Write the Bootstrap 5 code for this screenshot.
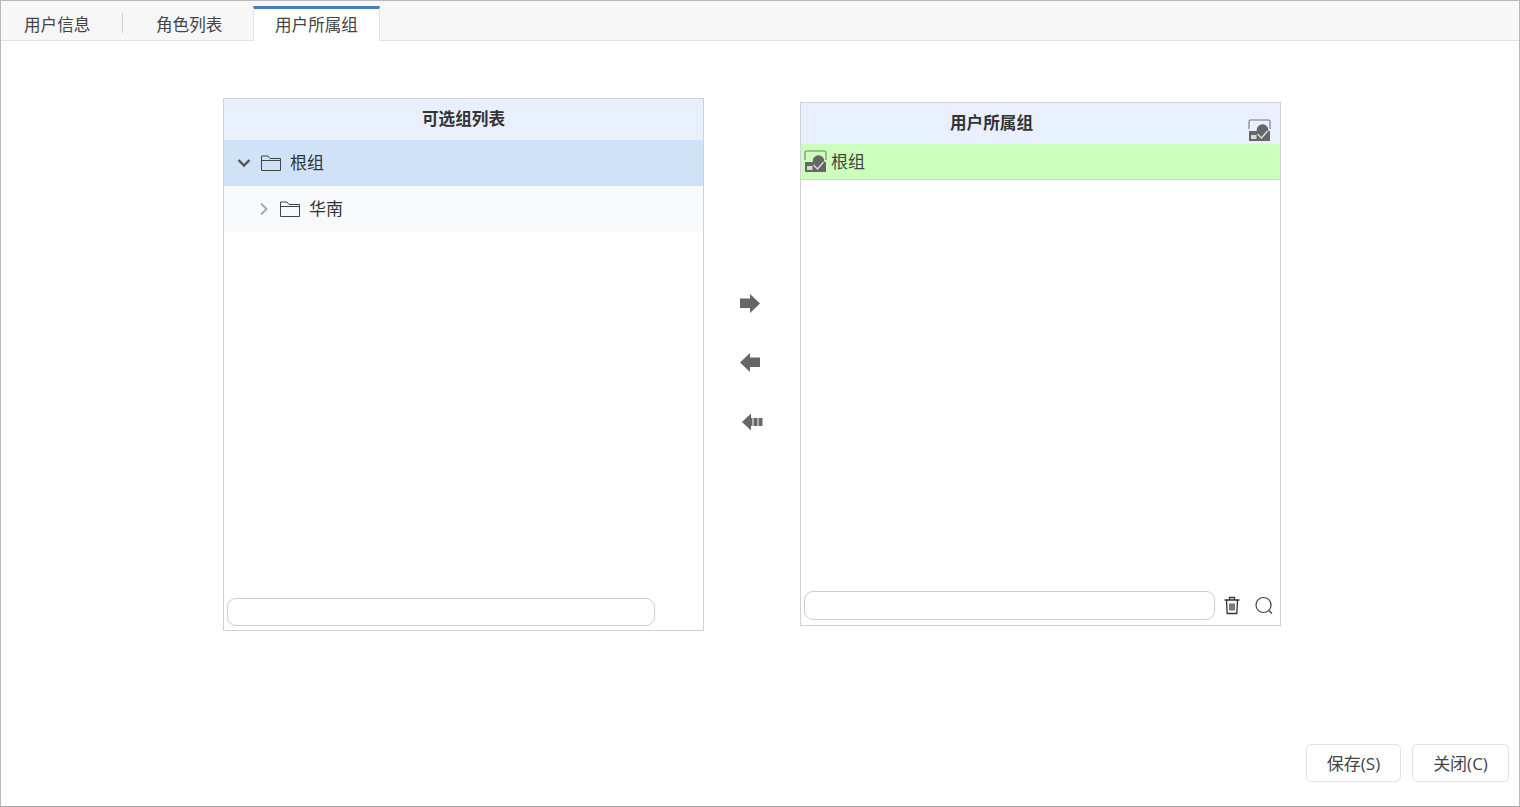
<!DOCTYPE html>
<html lang="zh">
<head>
<meta charset="utf-8">
<title>用户所属组</title>
<link href="https://cdn.jsdelivr.net/npm/bootstrap@5.3.0/dist/css/bootstrap.min.css" rel="stylesheet">
<style>
html,body{height:100%;margin:0;background:#fff;overflow:hidden}
body{font-family:"Open Sans","Noto Sans CJK SC",sans-serif;color:#333;font-size:16.6px}
.shell{width:1520px;height:807px;border:1px solid #b9b9b9;border-bottom-color:#a8a8a8}
.tabbar{height:40px;background:#f7f7f7;border-bottom:1px solid #e3e3e3}
.tabitem{height:35px;line-height:1;color:#444;white-space:nowrap}
.tab-a{width:121px;padding:5px 0 0 23px}
.tab-b{width:130px;padding:5px 0 0 33px}
.tab-sep{width:1px;height:20px;background:#d0d0d0;margin-bottom:7px}
.tab-on{width:127px;padding-left:21px;background:#fff;border-top:3px solid #4a7fb5;border-right:1px solid #e3e3e3;border-left:1px solid #e3e3e3;height:35px;margin-bottom:-1px}
.workarea{padding-left:222px}
.panel-box{width:481px;border:1px solid #d2d2d2;background:#fff}
.panel-l{height:533px;margin-top:57px}
.panel-r{height:524px;margin-top:61px}
.panel-head{height:41px;background:#e8effd;font-weight:700;color:#333;font-size:16.6px;padding-bottom:1px}
.panel-r .panel-head{padding-right:98px}
.tree-row{height:46px;color:#333;font-size:17px}
.tree-one{background:#d0e2f8;padding-left:13px}
.tree-two{background:#f8f9fb;padding-left:33px}
.fold-one{margin:0 9px 0 10px}
.fold-two{margin:0 9px 0 9px}
.sel-row{height:36px;background:#ccffbb;border-bottom:1px solid #c8dcc0;padding:0 0 0 3px;color:#444;font-size:17px}
.sel-ico{margin-right:4px}
.sel-label{padding-top:1px}
.search-l{width:428px;height:28px;margin:0 0 4px 3px}
.search-r{width:411px;height:29px;margin:0 0 5px 3px}
.search-box{border:1px solid #c9d0cc;border-radius:9px;background:#fff}
.movecol{width:96px;padding-top:252px;padding-left:35px;gap:38px}
.movecol svg{display:block}
.move-all{margin:1px 0 0 1px}
.head-mark{right:9px;top:16px}
.trash-ico{margin:5px 0 0 8px}
.find-ico{margin:5px 0 0 13px}
.footer-bar{padding:0 10px 24px 0;gap:11px}
.act{height:38px;border:1px solid #e2e2e2;border-radius:5px;background:#fff;color:#444;font-size:17px;padding:2px 0 0}
.act-s{width:95px}
.act-c{width:97px}
</style>
</head>
<body>
<div class="shell d-flex flex-column">
  <div class="tabbar d-flex align-items-end flex-shrink-0">
    <div class="tabitem tab-a d-flex align-items-center">用户信息</div>
    <div class="tab-sep"></div>
    <div class="tabitem tab-b d-flex align-items-center">角色列表</div>
    <div class="tabitem tab-on d-flex align-items-center">用户所属组</div>
  </div>
  <div class="workarea d-flex align-items-start flex-grow-1">
    <section class="panel-box panel-l d-flex flex-column">
      <div class="panel-head d-flex align-items-center justify-content-center">可选组列表</div>
      <div class="tree-row tree-one d-flex align-items-center">
        <svg width="14" height="10" viewBox="0 0 14 10"><path d="M1.500 2 7 7.500 12.500 2" fill="none" stroke="#555" stroke-width="2.400"/></svg>
        <svg class="fold-one" width="20" height="16" viewBox="0 0 20 16"><path d="M.5 15.500V1h6.500l2 2.500h10.500V15.500zM.5 5.500h19" fill="none" stroke="#444" stroke-width="1"/></svg>
        <span>根组</span>
      </div>
      <div class="tree-row tree-two d-flex align-items-center">
        <svg width="14" height="14" viewBox="0 0 14 14"><path d="M4 1.500 9.500 7 4 12.500" fill="none" stroke="#aaa" stroke-width="2"/></svg>
        <svg class="fold-two" width="20" height="16" viewBox="0 0 20 16"><path d="M.5 15.500V1h6.500l2 2.500h10.500V15.500zM.5 5.500h19" fill="none" stroke="#444" stroke-width="1"/></svg>
        <span>华南</span>
      </div>
      <div class="mt-auto search-l search-box"></div>
    </section>
    <div class="movecol d-flex flex-column flex-shrink-0">
      <svg width="22" height="21" viewBox="0 0 22 21"><path d="M1 5.500H11V1L21 10.500 11 20V15H1z" fill="#666"/></svg>
      <svg width="22" height="21" viewBox="0 0 22 21"><path d="M21 5.500H11V1L1 10.500 11 20V15H21z" fill="#666"/></svg>
      <svg class="move-all" width="24" height="20" viewBox="0 0 24 20"><path d="M11 1.500 2 10 11 18.500V14H12.500V6H11z" fill="#666"/><path d="M13.500 6H17.500V14H13.500zM18.500 6H22.500V14H18.500z" fill="#666"/></svg>
    </div>
    <section class="panel-box panel-r d-flex flex-column position-relative">
      <div class="panel-head d-flex align-items-center justify-content-center">用户所属组</div>
      <svg class="position-absolute head-mark" width="23" height="23" viewBox="0 0 23 23"><use href="#grpmark"/></svg>
      <div class="sel-row d-flex align-items-center">
        <svg class="sel-ico" width="23" height="23" viewBox="0 0 23 23">
          <g id="grpmark">
            <path d="M1 10V2.500Q1 1 2.500 1H20.500Q22 1 22 2.500V10" fill="none" stroke="#777" stroke-width="1.100"/>
            <path d="M1 12H22V22H1z" fill="#666"/>
            <circle cx="14.500" cy="11" r="5.800" fill="#666"/>
            <path d="M9.500 15 13.500 19 19.500 12" fill="none" stroke="#dfe5df" stroke-width="1.300"/>
            <path d="M3 16H8.500V20H3z" fill="#d8d8d8"/>
          </g>
        </svg>
        <span class="sel-label">根组</span>
      </div>
      <div class="mt-auto d-flex align-items-start">
        <div class="search-r search-box"></div>
        <svg class="trash-ico" width="18" height="19" viewBox="0 0 18 19"><path d="M1.500 4H16.500M6.500 4V1.500H11.500V4M3.500 4 4.200 17.500H13.800L14.500 4M7 7.500V14.500M9 7.500V14.500M11 7.500V14.500" fill="none" stroke="#333" stroke-width="1.300"/></svg>
        <svg class="find-ico" width="20" height="20" viewBox="0 0 20 20"><circle cx="9.500" cy="9" r="7.500" fill="none" stroke="#444" stroke-width="1.200"/><path d="M15 14.500 18 17.500" stroke="#444" stroke-width="1.300"/></svg>
      </div>
    </section>
  </div>
  <div class="footer-bar d-flex justify-content-end flex-shrink-0">
    <button type="button" class="btn act act-s">保存(S)</button>
    <button type="button" class="btn act act-c">关闭(C)</button>
  </div>
</div>
<script src="https://cdn.jsdelivr.net/npm/bootstrap@5.3.0/dist/js/bootstrap.bundle.min.js"></script>
</body>
</html>
